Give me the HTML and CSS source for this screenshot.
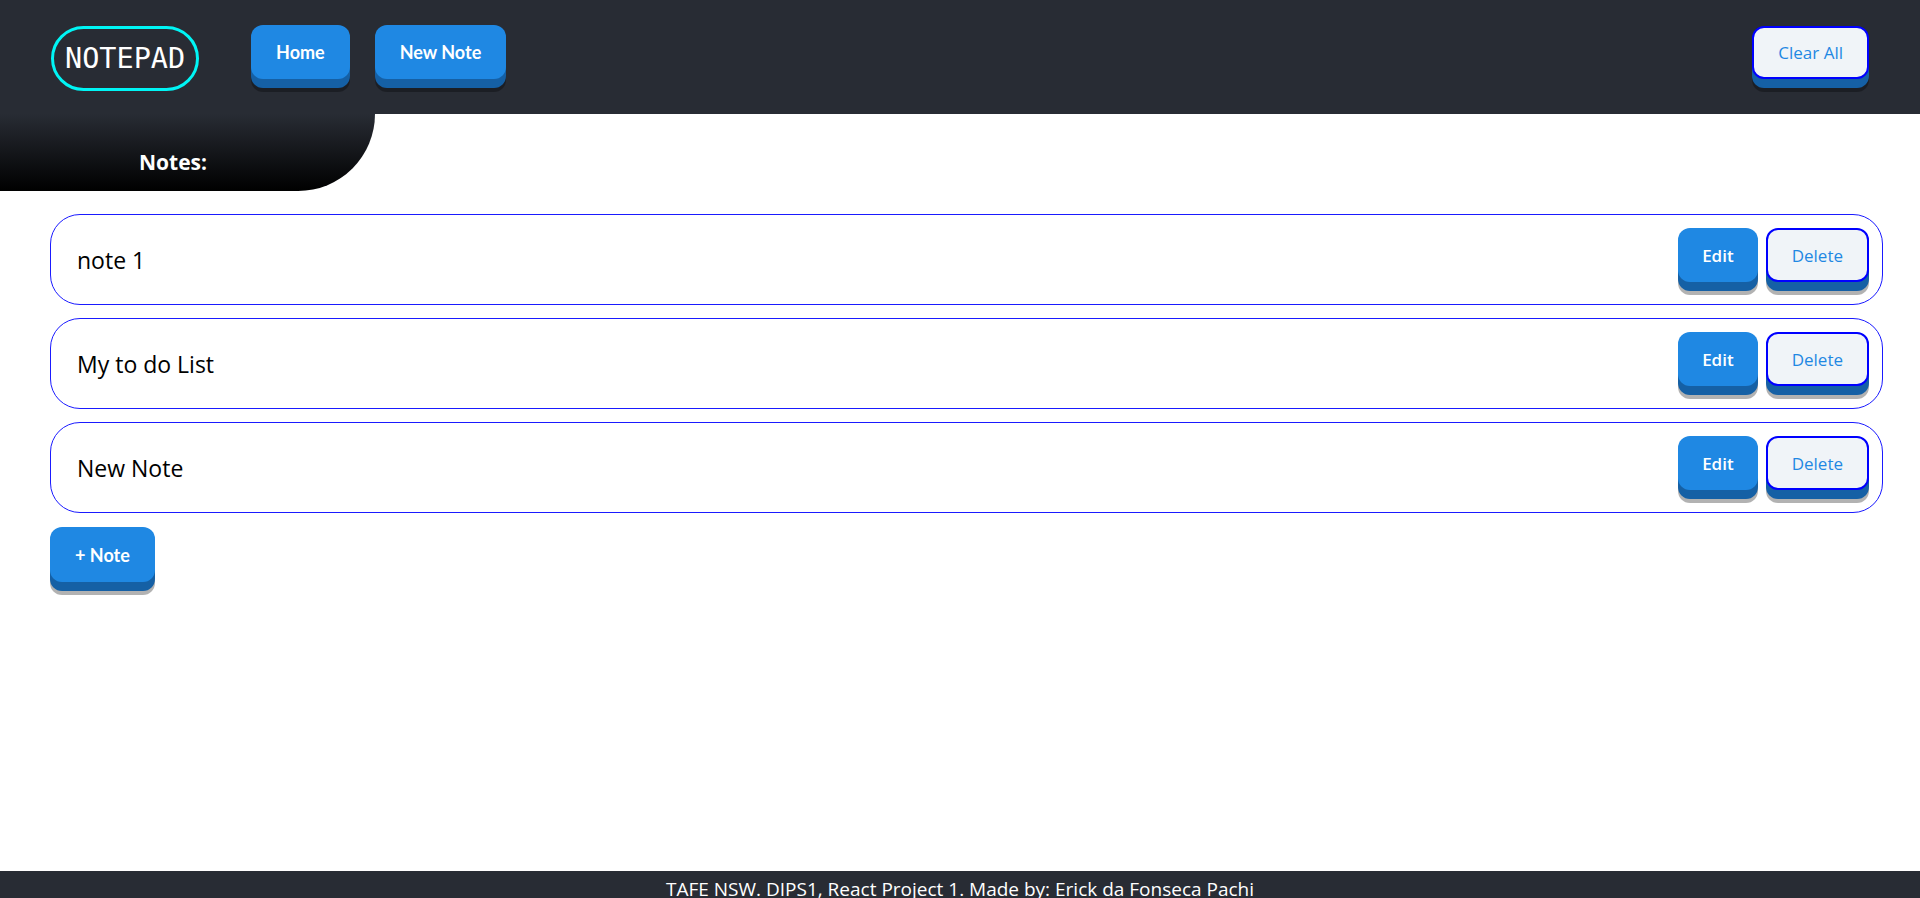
FILE: index.html
```html
<!DOCTYPE html>
<html lang="en">
<head>
<meta charset="utf-8">
<title>Notepad</title>
<link rel="stylesheet" href="styles.css">
</head>
<body>
<div class="app">
  <header class="topbar">
    <div class="logo">NOTEPAD</div>
    <nav class="nav">
      <button class="btn btn-primary">Home</button>
      <button class="btn btn-primary">New Note</button>
    </nav>
    <button class="btn btn-outline btn-clear">Clear All</button>
  </header>
  <div class="notes-tab"><span>Notes:</span></div>
  <main class="content">
    <ul class="note-list">
      <li class="note-card">
        <span class="note-title">note 1</span>
        <div class="note-actions">
          <button class="btn btn-small btn-edit">Edit</button>
          <button class="btn btn-small btn-outline">Delete</button>
        </div>
      </li>
      <li class="note-card">
        <span class="note-title">My to do List</span>
        <div class="note-actions">
          <button class="btn btn-small btn-edit">Edit</button>
          <button class="btn btn-small btn-outline">Delete</button>
        </div>
      </li>
      <li class="note-card">
        <span class="note-title">New Note</span>
        <div class="note-actions">
          <button class="btn btn-small btn-edit">Edit</button>
          <button class="btn btn-small btn-outline">Delete</button>
        </div>
      </li>
    </ul>
    <button class="btn btn-primary btn-add">+ Note</button>
  </main>
  <footer class="footer">TAFE NSW. DIPS1, React Project 1. Made by: Erick da Fonseca Pachi</footer>
</div>
</body>
</html>
```

FILE: styles.css
```css
* { box-sizing: border-box; }
html, body { margin: 0; padding: 0; }
body {
  font-family: "Open Sans", "Noto Sans", sans-serif;
  background: #ffffff;
  color: #000;
  overflow: hidden;
}
.app {
  display: grid;
  grid-template-rows: 114px 77px calc(100vh - 218px) auto;
}
.topbar {
  background: #282c34;
  display: flex;
  align-items: flex-start;
  padding: 25px 51px 0 51px;
}
.logo {
  margin-top: 1px;
  height: 65px;
  padding: 0 11px;
  border: 3px solid #00f5f5;
  border-radius: 40px;
  color: #ffffff;
  font-family: "DejaVu Sans Mono", "Liberation Mono", monospace;
  font-size: 28.5px;
  display: flex;
  align-items: center;
}
.nav {
  display: flex;
  gap: 25px;
  margin-left: 52px;
}
.btn {
  height: 54px;
  padding: 0 25px;
  border: none;
  border-radius: 12px;
  cursor: pointer;
  box-shadow: 0 9px 0 #1560a5, 0 13px 0 rgba(0, 0, 0, 0.3);
}
.btn-primary {
  background: #1f88e3;
  color: #ffffff;
  font-family: Lato, "Open Sans", sans-serif;
  font-weight: 700;
  font-size: 18px;
}
.btn-outline {
  background: #f0f4f8;
  color: #1f88e3;
  border: 2px solid #0000ff;
  font-family: "Open Sans", sans-serif;
  font-weight: 500;
  font-size: 17px;
  padding: 0 24px;
}
.btn-clear {
  margin-left: auto;
  margin-top: 1px;
  height: 53px;
}
.notes-tab {
  width: 375px;
  background: linear-gradient(to bottom, #282c34 0%, #000000 100%);
  border-bottom-right-radius: 77px;
  color: #ffffff;
  font-weight: 700;
  font-size: 21px;
  line-height: 21px;
  padding: 38px 0 0 139px;
}
.content {
  padding: 23px 37px 0 50px;
}
.note-list {
  list-style: none;
  margin: 0;
  padding: 0;
  display: flex;
  flex-direction: column;
  gap: 13px;
}
.note-card {
  height: 91px;
  border: 1px solid #1a1aff;
  border-radius: 30px;
  display: flex;
  align-items: center;
  justify-content: space-between;
  padding: 0 13px 0 26px;
}
.note-title {
  font-size: 23px;
}
.note-actions {
  display: flex;
  gap: 8px;
  padding-bottom: 9px;
}
.btn-small {
  font-size: 17px;
}
.btn-edit {
  background: #1f88e3;
  color: #ffffff;
  font-family: "Open Sans", sans-serif;
  font-weight: 600;
  padding: 0 24px;
}
.btn-add {
  margin-top: 14px;
  height: 55px;
}
.footer {
  background: #282c34;
  color: #ffffff;
  text-align: center;
  font-size: 19px;
  padding: 5px 0 12px;
}
```
